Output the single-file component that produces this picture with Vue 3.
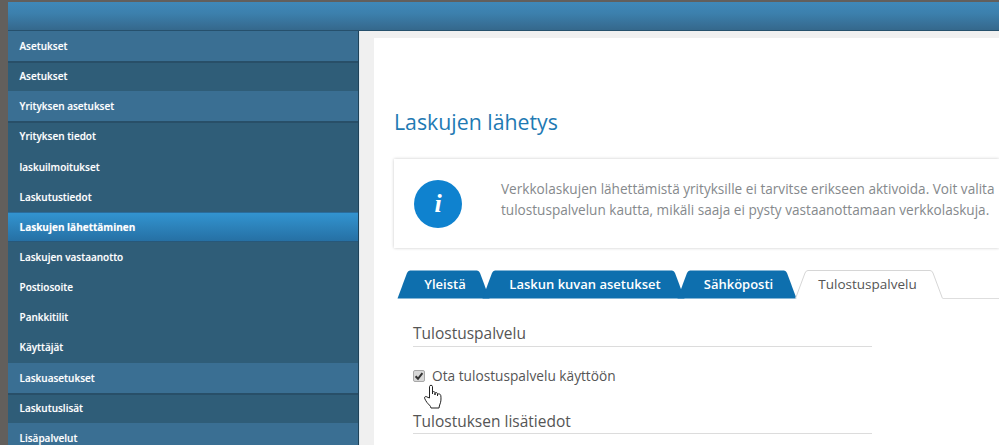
<template>
  <div class="page">
    <header class="topbar"></header>
    <div class="main">
      <nav class="sidebar">
        <a
          v-for="item in menu"
          :key="item.label + item.kind"
          class="menu-item"
          :class="item.kind"
        >{{ item.label }}</a>
      </nav>
      <section class="content">
        <div class="card">
          <h1 class="page-title">Laskujen lähetys</h1>
          <div class="info-box">
            <span class="info-icon">i</span>
            <p class="info-text">
              Verkkolaskujen lähettämistä yrityksille ei tarvitse erikseen aktivoida. Voit valita<br>
              tulostuspalvelun kautta, mikäli saaja ei pysty vastaanottamaan verkkolaskuja.
            </p>
          </div>
          <div class="tabs">
            <div
              v-for="tab in tabs"
              :key="tab.label"
              class="tab"
              :class="{ active: tab.active }"
              :style="{ width: tab.width + 'px' }"
            >
              <svg class="tab-bg" :width="tab.width" height="29" :viewBox="`0 0 ${tab.width} 29`">
                <path :d="tabPath(tab.width, tab.active)" />
              </svg>
              <span class="tab-label">{{ tab.label }}</span>
            </div>
            <div class="tab-line"></div>
          </div>
          <div class="form">
            <h2 class="form-heading">Tulostuspalvelu</h2>
            <label class="check-row">
              <span class="check-box">
                <svg width="12" height="12" viewBox="0 0 12 12">
                  <path d="M2.6 6.2 L5 8.8 L9.4 3.2" fill="none" stroke="#333" stroke-width="2" />
                </svg>
              </span>
              Ota tulostuspalvelu käyttöön
            </label>
            <h2 class="form-heading second">Tulostuksen lisätiedot</h2>
          </div>
          <svg class="hand" width="20" height="26" viewBox="0 0 20 26">
            <path
              d="M6.5 14 V2.6 C6.5 .8 9.5 .8 9.5 2.6 V10 V8.6 C9.5 7.2 12 7.2 12 8.8 V11 V9.6 C12 8.2 14.5 8.2 14.5 9.8 V12 V10.8 C14.5 9.4 17.6 9.6 17.8 11.6 C18.2 14.5 18 18 17 20 C16.5 21.5 16.2 22.5 16 24 H8 C7.6 21.5 5.5 20.5 4 18.5 C3 17 2 15.5 1.6 14.2 C1.2 12.6 3 12 4 13 Z"
              fill="#fff"
              stroke="#222"
              stroke-width="1"
              stroke-linejoin="round"
            />
          </svg>
        </div>
      </section>
    </div>
  </div>
</template>

<script setup>
const menu = [
  { label: 'Asetukset', kind: 'group' },
  { label: 'Asetukset', kind: 'sub first' },
  { label: 'Yrityksen asetukset', kind: 'group' },
  { label: 'Yrityksen tiedot', kind: 'sub first' },
  { label: 'laskuilmoitukset', kind: 'sub' },
  { label: 'Laskutustiedot', kind: 'sub' },
  { label: 'Laskujen lähettäminen', kind: 'current' },
  { label: 'Laskujen vastaanotto', kind: 'sub' },
  { label: 'Postiosoite', kind: 'sub' },
  { label: 'Pankkitilit', kind: 'sub' },
  { label: 'Käyttäjät', kind: 'sub' },
  { label: 'Laskuasetukset', kind: 'group' },
  { label: 'Laskutuslisät', kind: 'sub first' },
  { label: 'Lisäpalvelut', kind: 'group' }
];

const tabs = [
  { label: 'Yleistä', width: 93 },
  { label: 'Laskun kuvan asetukset', width: 203 },
  { label: 'Sähköposti', width: 120 },
  { label: 'Tulostuspalvelu', width: 148, active: true }
];

// slanted tab outline, open at the bottom for the active one
function tabPath(w, active) {
  const sides = `M.5 28.5 L10 3 Q11 .5 13 .5 H${w - 13} Q${w - 11} .5 ${w - 10} 3 L${w - .5} 28.5`;
  return active ? sides : sides + ' Z';
}
</script>

<style>
body {
  margin: 0;
  background: #5f5f5f;
}
</style>

<style scoped>
.page {
  width: 999px;
  height: 445px;
  box-sizing: border-box;
  padding: 2px 0 0 8px;
  overflow: hidden;
  background: #625f5c;
  font-family: "Open Sans", sans-serif;
}

.topbar {
  height: 28px;
  background: linear-gradient(#3f88b8, #3c80ad 40%, #35688c);
  border-bottom: 1px solid #26506c;
}

.main {
  display: flex;
  height: 414px;
}

.sidebar {
  flex: none;
  width: 350px;
  border-right: 1px solid #1f4258;
  background: #2f5d78;
}

.menu-item {
  display: block;
  height: 30.15px;
  line-height: 30px;
  padding-left: 11.5px;
  box-sizing: border-box;
  color: #fff;
  font-size: 10px;
  font-weight: 600;
  text-shadow: 0 0 1px rgba(255, 255, 255, .35);
}

.menu-item.group {
  background: #3a6f93;
}

.menu-item.first {
  border-top: 2px solid #284f68;
  line-height: 26px;
}

.menu-item.current {
  font-weight: 700;
  background: linear-gradient(#3294d0, #2670a4);
  border-top: 1px solid #2b6d9c;
  border-bottom: 1px solid #27587a;
  line-height: 28px;
}

.content {
  flex: 1;
  min-width: 0;
  padding: 7px 0 0 14px;
  background: #f0f0f0;
  border-left: 1px solid #dfeaf0;
}

.card {
  position: relative;
  height: 100%;
  background: #fff;
  padding: 0 0 0 20px;
}

.page-title {
  margin: 0;
  padding-top: 68px;
  font-size: 21.3px;
  line-height: 32px;
  font-weight: 400;
  color: #1f7ab3;
}

.info-box {
  display: flex;
  align-items: center;
  height: 89px;
  margin-top: 21px;
  padding-left: 20px;
  background: #fff;
  box-shadow: 0 0 3px rgba(0, 0, 0, .22);
}

.info-icon {
  flex: none;
  width: 48px;
  height: 48px;
  border-radius: 50%;
  background: #0f82cf;
  color: #fff;
  text-align: center;
  font-family: "Liberation Serif", serif;
  font-style: italic;
  font-weight: 700;
  font-size: 26px;
  line-height: 48px;
}

.info-text {
  margin: 0 0 10px 39px;
  font-size: 13.6px;
  line-height: 21px;
  color: #85898c;
  white-space: nowrap;
}

.tabs {
  display: flex;
  position: relative;
  height: 29px;
  margin-top: 22px;
  margin-left: 3px;
}

.tab {
  position: relative;
  flex: none;
  height: 29px;
  margin-right: -8px;
  padding-left: 3px;
  box-sizing: border-box;
  text-align: center;
  color: #fff;
  font-size: 13px;
  font-weight: 600;
  line-height: 28px;
}

.tab:nth-child(3) {
  margin-right: -2px;
}

.tab-bg {
  position: absolute;
  left: 0;
  top: 0;
}

.tab-bg path {
  fill: #0e6fae;
}

.tab-label {
  position: relative;
}

.tab.active {
  padding-right: 3px;
  padding-left: 0;
  color: #555;
  font-size: 13.5px;
  font-weight: 400;
}

.tab.active .tab-bg path {
  fill: #fff;
  stroke: #d6d6d6;
}

.tab-line {
  flex: 1;
  margin-left: 8px;
  height: 29px;
  box-sizing: border-box;
  border-bottom: 1px solid #dedede;
}

.form {
  width: 459px;
  margin-left: 19px;
}

.form-heading {
  margin: 0;
  padding-top: 22px;
  height: 48px;
  box-sizing: border-box;
  font-size: 15.5px;
  line-height: 24px;
  font-weight: 400;
  color: #555;
  border-bottom: 1px solid #dcdcdc;
}

.form-heading.second {
  padding-top: 0;
  height: 25px;
  margin-top: 23px;
}

.check-row {
  display: flex;
  align-items: center;
  gap: 7px;
  margin-top: 19px;
  font-size: 13.7px;
  line-height: 20px;
  color: #555;
}

.check-box {
  width: 12px;
  height: 12px;
  border-radius: 2px;
  background: #d8d8d8;
  border: 1px solid #a8a8a8;
  box-sizing: border-box;
  display: flex;
  align-items: center;
  justify-content: center;
}

.check-box svg {
  flex: none;
}

.hand {
  position: absolute;
  left: 49px;
  top: 346px;
}
</style>
